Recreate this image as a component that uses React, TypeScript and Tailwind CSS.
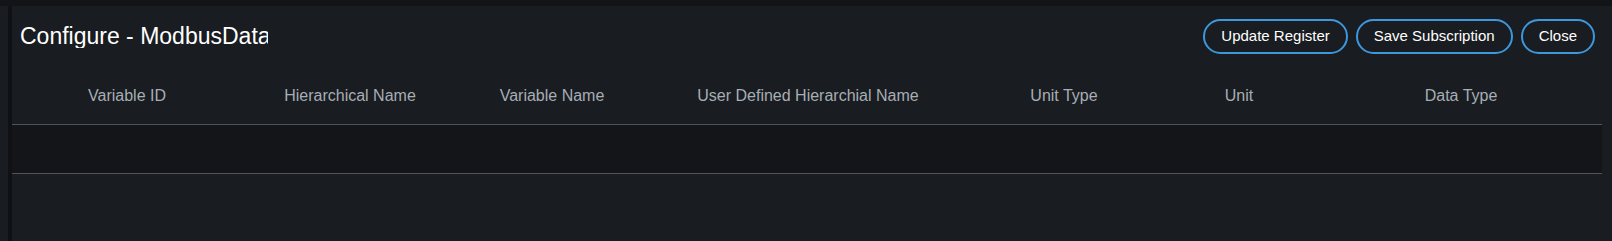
const columns = [
  'Variable ID',
  'Hierarchical Name',
  'Variable Name',
  'User Defined Hierarchial Name',
  'Unit Type',
  'Unit',
  'Data Type',
];

const actions = ['Update Register', 'Save Subscription', 'Close'];

export default function App() {
  return (
    <div className="h-[241px] w-[1612px] overflow-hidden bg-[#191c20] font-['Liberation_Sans',Arial,sans-serif]">
      <div className="h-[6px] bg-[#121418]" />
      <div className="flex">
        <div className="ml-[8px] h-[235px] w-[4px] bg-[#0f1114]" />
        <div className="flex-1 pr-[10px]">
          {/* Header: title + actions */}
          <div className="flex h-[60px] items-center justify-between pl-[8px] pr-[7px]">
            <h1 className="max-w-[248px] overflow-hidden whitespace-nowrap text-[23px] leading-none text-white">
              Configure - ModbusData
            </h1>
            <div className="flex items-center gap-2">
              {actions.map((label) => (
                <button
                  key={label}
                  type="button"
                  className="h-[35px] rounded-full border-2 border-[#3d97dc] bg-[#191c20] px-4 text-[15px] text-white"
                >
                  {label}
                </button>
              ))}
            </div>
          </div>

          {/* Table */}
          <div className="grid grid-cols-[230px_216px_188px_324px_188px_162px_282px] border-b border-[#505357] text-[16px] text-[#a7aeb5]">
            {columns.map((col) => (
              <div key={col} className="flex h-[58px] items-center justify-center pt-[1px] whitespace-nowrap">
                {col}
              </div>
            ))}
          </div>
          <div className="h-[49px] border-b border-[#505357] bg-[#131519]" />
        </div>
      </div>
    </div>
  );
}
